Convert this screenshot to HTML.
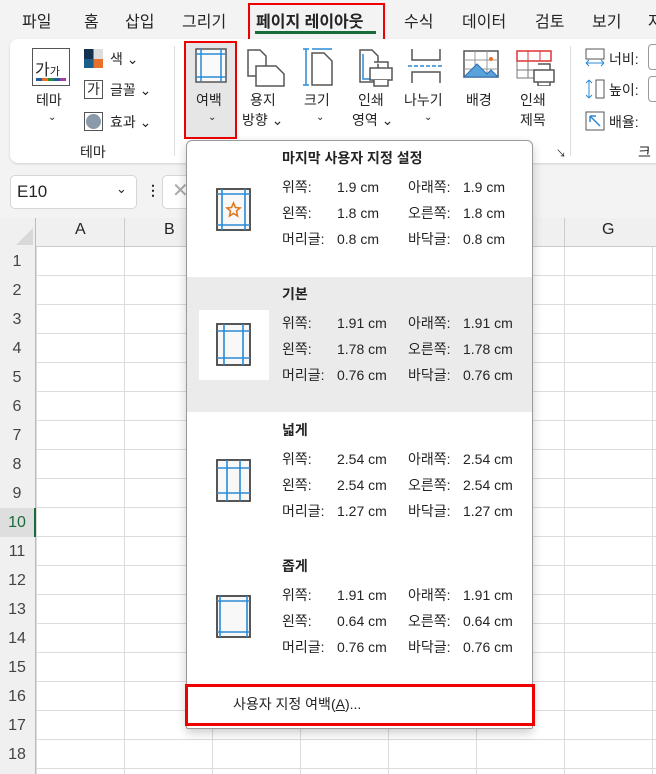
<!DOCTYPE html><html><head><meta charset="utf-8"><style>
*{margin:0;padding:0;box-sizing:border-box}
body{width:656px;height:774px;overflow:hidden;background:#f3f3f3;font-family:"Liberation Sans","Noto Sans CJK KR",sans-serif;color:#242424;position:relative}
.a{position:absolute;white-space:nowrap}
.tab{top:8px;font-size:16px}
.lb{font-size:14px;text-align:center}
.mi{font-size:14px}
.ch{font-size:10px}
</style></head><body>
<div class="a tab" style="left:22px">파일</div>
<div class="a tab" style="left:84px">홈</div>
<div class="a tab" style="left:125px">삽입</div>
<div class="a tab" style="left:182px">그리기</div>
<div class="a" style="left:248px;top:3px;width:137px;height:38px;border:2px solid #e00"></div>
<div class="a tab" style="left:256px;font-weight:bold">페이지 레이아웃</div>
<div class="a" style="left:255px;top:31px;width:121px;height:3px;background:#1a6b3c"></div>
<div class="a tab" style="left:404px">수식</div>
<div class="a tab" style="left:462px">데이터</div>
<div class="a tab" style="left:535px">검토</div>
<div class="a tab" style="left:592px">보기</div>
<div class="a tab" style="left:648px">자</div>
<div class="a" style="left:10px;top:39px;width:660px;height:124px;background:#fff;border-radius:8px;box-shadow:0 1px 2px rgba(0,0,0,.15)"></div>
<div class="a" style="left:32px;top:48px;width:38px;height:38px;border:1.5px solid #555;background:#fff"><div style="font-size:16px;margin:7px 0 0 2px">가<span style="font-size:11px">가</span></div><div style="position:absolute;left:3px;bottom:4px;width:30px;height:3px;background:linear-gradient(90deg,#1f5f9f 20%,#e8702a 20% 40%,#2a8a3a 40% 60%,#1f5f9f 60% 80%,#a040a0 80%)"></div></div>
<div class="a lb" style="left:36px;top:90px">테마</div>
<div class="a ch" style="left:48px;top:112px">⌄</div>
<div class="a" style="left:84px;top:49px;width:19px;height:19px;background:linear-gradient(90deg,#12304f 50%,#ddd 50%)"><div style="position:absolute;top:10px;left:0;width:19px;height:9px;background:linear-gradient(90deg,#1a5f8a 50%,#e8702a 50%)"></div></div>
<div class="a mi" style="left:110px;top:49px">색 ⌄</div>
<div class="a" style="left:84px;top:80px;width:19px;height:19px;border:1px solid #555;font-size:14px;line-height:17px;text-align:center">가</div>
<div class="a mi" style="left:110px;top:80px">글꼴 ⌄</div>
<div class="a" style="left:84px;top:112px;width:19px;height:19px;border:1px solid #555"><div style="margin:1px;width:15px;height:15px;border-radius:50%;background:#8a9aaa"></div></div>
<div class="a mi" style="left:110px;top:112px">효과 ⌄</div>
<div class="a lb" style="left:80px;top:142px">테마</div>
<div class="a" style="left:174px;top:46px;width:1px;height:110px;background:#ddd"></div>
<div class="a" style="left:184px;top:41px;width:53px;height:98px;background:#e6e6e6;border:2px solid #e00"></div>
<svg class="a" style="left:195px;top:48px" width="32" height="36"><rect x="1" y="1" width="30" height="33" fill="#fafafa" stroke="#555" stroke-width="1.5"/><path d="M1 6H31M1 29H31M6 1V34M26 1V34" stroke="#2a8ad4" stroke-width="1.5"/></svg>
<div class="a lb" style="left:196px;top:90px">여백</div>
<div class="a ch" style="left:208px;top:112px">⌄</div>
<svg class="a" style="left:246px;top:48px" width="40" height="40" fill="#fff" stroke="#555" stroke-width="1.5"><path d="M2 2H14L20 8V28H2Z"/><path d="M10 18H30L38 26V38H10Z"/></svg>
<div class="a lb" style="left:250px;top:90px">용지</div>
<div class="a lb" style="left:242px;top:110px">방향 ⌄</div>
<svg class="a" style="left:302px;top:47px" width="34" height="40"><path d="M4 2V38M1 2H7M1 38H7M10 2H30" stroke="#2a8ad4" stroke-width="1.5"/><path d="M10 6H22L30 14V38H10Z" fill="#fff" stroke="#555" stroke-width="1.5"/></svg>
<div class="a lb" style="left:304px;top:90px">크기</div>
<div class="a ch" style="left:316px;top:112px">⌄</div>
<svg class="a" style="left:358px;top:48px" width="36" height="40" fill="#fff" stroke="#555" stroke-width="1.5"><path d="M2 2H14L20 8V34H2Z"/><path d="M5 6V31H14" stroke="#2a8ad4"/><path d="M12 20H34V32H12Z"/><path d="M16 14H30V20M16 32V38H30V32"/></svg>
<div class="a lb" style="left:358px;top:90px">인쇄</div>
<div class="a lb" style="left:352px;top:110px">영역 ⌄</div>
<svg class="a" style="left:408px;top:48px" width="36" height="36" fill="none" stroke="#555" stroke-width="1.5"><path d="M4 1V12H32V1M4 35V24H32V35"/><path d="M0 18H36" stroke="#2a8ad4" stroke-dasharray="4 2"/></svg>
<div class="a lb" style="left:404px;top:90px">나누기</div>
<div class="a ch" style="left:424px;top:112px">⌄</div>
<svg class="a" style="left:463px;top:50px" width="36" height="32"><rect x="1" y="1" width="34" height="26" fill="#fff" stroke="#555" stroke-width="1.5"/><path d="M1 10H35M1 19H35M12 1V27M24 1V27" stroke="#999"/><path d="M1 27L14 14L24 24L28 20L35 27Z" fill="#5aa2dc" stroke="#2a6fb0"/><circle cx="28" cy="9" r="2" fill="#e8702a"/></svg>
<div class="a lb" style="left:466px;top:90px">배경</div>
<svg class="a" style="left:516px;top:50px" width="40" height="36"><path d="M1 1H35V11H1Z" fill="#fff" stroke="#d33" stroke-width="1.5"/><path d="M12 1V11M24 1V11" stroke="#d33"/><path d="M1 11V28H18M1 20H18M12 11V28" fill="none" stroke="#777"/><path d="M18 20H38V32H18Z M22 14H34V20 M22 32V36H34V32" fill="#fff" stroke="#555" stroke-width="1.5"/></svg>
<div class="a lb" style="left:520px;top:90px">인쇄</div>
<div class="a lb" style="left:520px;top:110px">제목</div>
<div class="a" style="left:570px;top:46px;width:1px;height:110px;background:#ddd"></div>
<div class="a ch" style="left:556px;top:145px">↘</div>
<svg class="a" style="left:584px;top:47px" width="22" height="20" fill="none"><path d="M2 2H20V12H2Z" stroke="#555"/><path d="M2 16H20M2 16L5 13M2 16L5 19M20 16L17 13M20 16L17 19" stroke="#2a8ad4"/></svg>
<div class="a mi" style="left:609px;top:49px">너비:</div>
<svg class="a" style="left:584px;top:78px" width="22" height="22" fill="none"><path d="M12 2H20V20H12Z" stroke="#555"/><path d="M5 2V20M5 2L2 5M5 2L8 5M5 20L2 17M5 20L8 17" stroke="#2a8ad4"/></svg>
<div class="a mi" style="left:609px;top:80px">높이:</div>
<svg class="a" style="left:584px;top:110px" width="22" height="22" fill="none"><path d="M2 2H20V20H2Z" stroke="#555"/><path d="M16 16L6 6M6 6H12M6 6V12" stroke="#2a8ad4" stroke-width="1.5"/></svg>
<div class="a mi" style="left:609px;top:112px">배율:</div>
<div class="a" style="left:648px;top:44px;width:12px;height:26px;border:1px solid #999;border-radius:4px"></div>
<div class="a" style="left:648px;top:76px;width:12px;height:26px;border:1px solid #999;border-radius:4px"></div>
<div class="a lb" style="left:638px;top:142px">크</div>
<div class="a" style="left:10px;top:175px;width:127px;height:34px;background:#fff;border:1px solid #d6d6d6;border-radius:5px"></div>
<div class="a" style="left:17px;top:182px;font-size:17px">E10</div>
<div class="a" style="left:116px;top:181px;font-size:13px">⌄</div>
<div class="a" style="left:146px;top:182px;font-size:14px;font-weight:bold">⋮</div>
<div class="a" style="left:162px;top:175px;width:40px;height:34px;background:#fff;border:1px solid #d6d6d6;border-radius:5px;color:#aaa;font-size:20px;padding:2px 0 0 9px">✕</div>
<div class="a" style="left:0;top:218px;width:656px;height:556px;background:#fff;
background-image:linear-gradient(#dcdcdc 1px,transparent 1px),linear-gradient(90deg,#dcdcdc 1px,transparent 1px);background-size:100% 29px,88px 100%;background-position:0 28px,36px 0"></div>
<div class="a" style="left:0;top:218px;width:656px;height:29px;background:#f0f0f0;border-bottom:1px solid #ccc"></div>
<div class="a" style="left:0;top:218px;width:36px;height:556px;background:#f0f0f0;border-right:1px solid #bbb"></div>
<svg class="a" style="left:12px;top:228px" width="22" height="18"><path d="M21 0V17H4Z" fill="#d8d8d8"/></svg>
<div class="a" style="left:75px;top:221px;font-size:16px">A</div>
<div class="a" style="left:164px;top:221px;font-size:16px">B</div>
<div class="a" style="left:602px;top:221px;font-size:16px">G</div>
<div class="a" style="left:124px;top:218px;width:1px;height:29px;background:#ccc"></div>
<div class="a" style="left:564px;top:218px;width:1px;height:29px;background:#ccc"></div>
<div class="a" style="left:0;top:508px;width:36px;height:29px;background:#dedede;border-right:2px solid #1a6b3c"></div>
<div class="a" style="left:0;top:247px;width:34px;font-size:16px;line-height:29px;text-align:center;color:#444">
1<br>2<br>3<br>4<br>5<br>6<br>7<br>8<br>9<br><span style="color:#1a6b3c">10</span><br>11<br>12<br>13<br>14<br>15<br>16<br>17<br>18</div>
<div class="a" style="left:186px;top:140px;width:347px;height:589px;background:#fff;border:1px solid #999;border-radius:6px 6px 2px 2px;box-shadow:0 4px 10px rgba(0,0,0,.2)"></div>
<div class="a" style="left:187px;top:277px;width:345px;height:135px;background:#ebebeb"></div>
<div class="a" style="left:199px;top:310px;width:70px;height:70px;background:#fff"></div>
<svg class="a" style="left:216px;top:188px" width="36" height="44"><rect x="1" y="1" width="33" height="41" fill="#f8f8f8" stroke="#444" stroke-width="1.8"/><path d="M1 6H34M1 37H34M6 1V42M29 1V42" stroke="#2a8ad4" stroke-width="1.6"/><path d="M17.5 15L19.5 19.5L24 20L20.5 23L21.5 28L17.5 25.5L13.5 28L14.5 23L11 20L15.5 19.5Z" fill="none" stroke="#e07a20" stroke-width="1.6"/></svg>
<svg class="a" style="left:216px;top:323px" width="36" height="44"><rect x="1" y="1" width="33" height="41" fill="#f8f8f8" stroke="#444" stroke-width="1.8"/><path d="M1 8H34M1 35H34M8 1V42M27 1V42" stroke="#2a8ad4" stroke-width="1.6"/></svg>
<svg class="a" style="left:216px;top:459px" width="36" height="44"><rect x="1" y="1" width="33" height="41" fill="#f8f8f8" stroke="#444" stroke-width="1.8"/><path d="M1 9H34M1 34H34M11 1V42M24 1V42" stroke="#2a8ad4" stroke-width="1.6"/></svg>
<svg class="a" style="left:216px;top:595px" width="36" height="44"><rect x="1" y="1" width="33" height="41" fill="#f8f8f8" stroke="#444" stroke-width="1.8"/><path d="M1 6H34M1 37H34M4 1V42M31 1V42" stroke="#2a8ad4" stroke-width="1.6"/></svg>
<div class="a" style="left:282px;top:148px;font-size:14px;font-weight:bold">마지막 사용자 지정 설정</div>
<div class="a mi" style="left:282px;top:174px;line-height:26px">위쪽:<br>왼쪽:<br>머리글:</div>
<div class="a mi" style="left:337px;top:174px;line-height:26px">1.9 cm<br>1.8 cm<br>0.8 cm</div>
<div class="a mi" style="left:408px;top:174px;line-height:26px">아래쪽:<br>오른쪽:<br>바닥글:</div>
<div class="a mi" style="left:463px;top:174px;line-height:26px">1.9 cm<br>1.8 cm<br>0.8 cm</div>
<div class="a" style="left:282px;top:284px;font-size:14px;font-weight:bold">기본</div>
<div class="a mi" style="left:282px;top:310px;line-height:26px">위쪽:<br>왼쪽:<br>머리글:</div>
<div class="a mi" style="left:337px;top:310px;line-height:26px">1.91 cm<br>1.78 cm<br>0.76 cm</div>
<div class="a mi" style="left:408px;top:310px;line-height:26px">아래쪽:<br>오른쪽:<br>바닥글:</div>
<div class="a mi" style="left:463px;top:310px;line-height:26px">1.91 cm<br>1.78 cm<br>0.76 cm</div>
<div class="a" style="left:282px;top:420px;font-size:14px;font-weight:bold">넓게</div>
<div class="a mi" style="left:282px;top:446px;line-height:26px">위쪽:<br>왼쪽:<br>머리글:</div>
<div class="a mi" style="left:337px;top:446px;line-height:26px">2.54 cm<br>2.54 cm<br>1.27 cm</div>
<div class="a mi" style="left:408px;top:446px;line-height:26px">아래쪽:<br>오른쪽:<br>바닥글:</div>
<div class="a mi" style="left:463px;top:446px;line-height:26px">2.54 cm<br>2.54 cm<br>1.27 cm</div>
<div class="a" style="left:282px;top:556px;font-size:14px;font-weight:bold">좁게</div>
<div class="a mi" style="left:282px;top:582px;line-height:26px">위쪽:<br>왼쪽:<br>머리글:</div>
<div class="a mi" style="left:337px;top:582px;line-height:26px">1.91 cm<br>0.64 cm<br>0.76 cm</div>
<div class="a mi" style="left:408px;top:582px;line-height:26px">아래쪽:<br>오른쪽:<br>바닥글:</div>
<div class="a mi" style="left:463px;top:582px;line-height:26px">1.91 cm<br>0.64 cm<br>0.76 cm</div>
<div class="a" style="left:185px;top:684px;width:350px;height:42px;border:3px solid #e00"></div>
<div class="a mi" style="left:233px;top:694px">사용자 지정 여백(<u>A</u>)...</div>
</body></html>
